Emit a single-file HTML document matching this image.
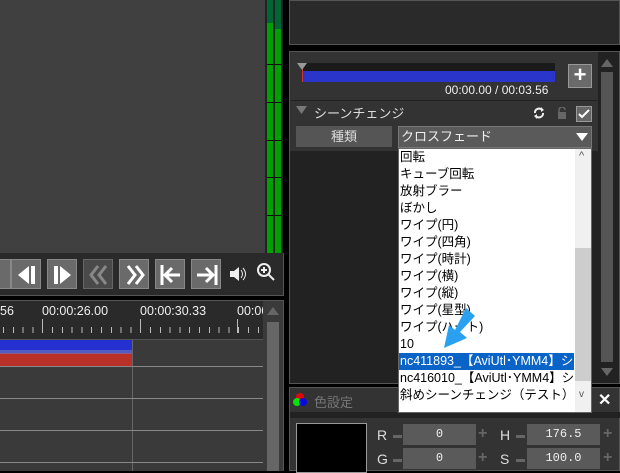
<!DOCTYPE html>
<html><head><meta charset="utf-8"><style>
*{margin:0;padding:0;box-sizing:border-box}
body{width:620px;height:471px;background:#000;position:relative;overflow:hidden;font-family:"Liberation Sans","Noto Sans CJK JP",sans-serif;color:#ddd}
.a{position:absolute}
.btn{position:absolute;top:259px;width:30px;height:30px;background:#6a6a6a;border:1px solid #888}
.li{position:absolute;left:400px;font-size:12.5px;color:#000;height:17px;line-height:17px;white-space:nowrap;z-index:5}
.tk{position:absolute;width:1px;background:#bbb}
.dd{z-index:4}
</style></head><body>
<!-- left preview -->
<div class="a" style="left:0;top:0;width:266px;height:253px;background:#404040"></div>
<div class="a" style="left:265px;top:0;width:18px;height:253px;background:#222"></div>
<div class="a" style="left:267px;top:0;width:6px;height:253px;background:#00a000"></div>
<div class="a" style="left:275px;top:0;width:6px;height:253px;background:#00a000"></div>
<div class="a" style="left:267px;top:0;width:6px;height:23px;background:#063"></div>
<div class="a" style="left:275px;top:0;width:6px;height:29px;background:#063"></div>
<div class="a" style="left:267px;top:64px;width:14px;height:1px;background:#111"></div>
<div class="a" style="left:267px;top:102px;width:14px;height:1px;background:#111"></div>
<div class="a" style="left:267px;top:140px;width:14px;height:1px;background:#111"></div>
<div class="a" style="left:267px;top:177px;width:14px;height:1px;background:#111"></div>
<div class="a" style="left:267px;top:215px;width:14px;height:1px;background:#111"></div>
<!-- transport -->
<div class="a" style="left:0;top:253px;width:284px;height:43px;background:#2a2a2a;border-right:1px solid #555;border-bottom:1px solid #555"></div>
<div class="btn" style="left:-19px"></div>
<div class="btn" style="left:11px"><svg width="30" height="30"><path d="M6 15L17 6V24Z M19 6h4v18h-4z" fill="#fff"/></svg></div>
<div class="btn" style="left:47px"><svg width="30" height="30"><path d="M6 6h4v18h-4z M12 6L23 15 12 24Z" fill="#fff"/></svg></div>
<div class="btn" style="left:83px;background:#4a4a4a;border-color:#666"><svg width="30" height="30"><path d="M14 6L7 15 14 24 M22 6L15 15 22 24" stroke="#888" stroke-width="3" fill="none"/></svg></div>
<div class="btn" style="left:119px"><svg width="30" height="30"><path d="M8 6L15 15 8 24 M16 6L23 15 16 24" stroke="#fff" stroke-width="3" fill="none"/></svg></div>
<div class="btn" style="left:155px"><svg width="30" height="30"><path d="M6 5v20M24 15H10M16 8L9 15 16 22" stroke="#fff" stroke-width="3" fill="none"/></svg></div>
<div class="btn" style="left:191px"><svg width="30" height="30"><path d="M24 5v20M5 15H20M14 8L21 15 14 22" stroke="#fff" stroke-width="3" fill="none"/></svg></div>
<svg class="a" style="left:228px;top:265px" width="20" height="18"><path d="M2 6h4l5-4v14l-5-4H2z" fill="#eee"/><path d="M13 5q3 4 0 8M15 3q5 6 0 12" stroke="#eee" fill="none"/></svg>
<svg class="a" style="left:256px;top:262px" width="20" height="20"><circle cx="8" cy="8" r="6" stroke="#eee" stroke-width="2" fill="none"/><path d="M12 12l6 6M5 8h6M8 5v6" stroke="#eee" stroke-width="2"/></svg>
<!-- timeline -->
<div class="a" style="left:0;top:300px;width:284px;height:171px;background:#3a3a3a;border-right:1px solid #555;border-top:1px solid #555"></div>
<div class="a" style="left:0;top:301px;width:263px;height:38px;background:#2a2a2a"></div>
<div class="a" style="left:0;top:304px;font-size:12.5px;color:#eee;white-space:nowrap">56</div>
<div class="a" style="left:42px;top:304px;font-size:12.5px;color:#eee">00:00:26.00</div>
<div class="a" style="left:140px;top:304px;font-size:12.5px;color:#eee">00:00:30.33</div>
<div class="a" style="left:237px;top:304px;font-size:12.5px;color:#eee;width:26px;overflow:hidden;white-space:nowrap">00:00</div>
<div class="tk" style="left:42px;top:319px;height:14px"></div>
<div class="tk" style="left:140px;top:319px;height:14px"></div>
<div class="tk" style="left:237px;top:319px;height:14px"></div>
<div class="a" style="left:3px;top:327px;width:260px;height:6px;background:repeating-linear-gradient(90deg,#bbb 0 1px,transparent 1px 9.8px)"></div>
<div class="a" style="left:0;top:339px;width:263px;height:1px;background:#555"></div>
<div class="a" style="left:0;top:340px;width:132px;height:13px;background:#2530d0"></div>
<div class="a" style="left:0;top:353px;width:132px;height:13px;background:#b83028"></div>
<div class="a" style="left:0;top:350px;width:132px;height:4px;background:#7078c0;opacity:.6"></div>
<div class="a" style="left:132px;top:340px;width:1px;height:131px;background:#666"></div>
<div class="a" style="left:0;top:366px;width:263px;height:1px;background:#888"></div>
<div class="a" style="left:0;top:398px;width:263px;height:1px;background:#888"></div>
<div class="a" style="left:0;top:430px;width:263px;height:1px;background:#888"></div>
<div class="a" style="left:0;top:462px;width:263px;height:1px;background:#888"></div>
<div class="a" style="left:267px;top:322px;width:12px;height:149px;background:#666"></div>
<svg class="a" style="left:267px;top:305px" width="12" height="10"><path d="M0 10L6 2 12 10Z" fill="#666"/></svg>
<!-- right top -->
<div class="a" style="left:289px;top:0;width:331px;height:45px;background:#2a2a2a;border:1px solid #555"></div>
<!-- right panel -->
<div class="a" style="left:289px;top:51px;width:331px;height:333px;background:#222;border:1px solid #555"></div>
<div class="a" style="left:290px;top:52px;width:308px;height:48px;background:#333"></div>
<div class="a" style="left:302px;top:63px;width:253px;height:9px;background:#1a1a1a"></div>
<div class="a" style="left:302px;top:71px;width:253px;height:11px;background:#2a35cc"></div>
<div class="a" style="left:302px;top:65px;width:1px;height:17px;background:#c33"></div>
<svg class="a" style="left:297px;top:63px" width="12" height="8"><path d="M0 0H10L5 7Z" fill="#999"/></svg>
<div class="a" style="left:445px;top:83px;font-size:12px;color:#eee">00:00.00 / 00:03.56</div>
<div class="a" style="left:568px;top:64px;width:24px;height:24px;background:#6a6a6a;border:1px solid #999;color:#fff;font-size:22px;line-height:20px;text-align:center;font-weight:bold">+</div>
<div class="a" style="left:290px;top:101px;width:308px;height:50px;background:#333"></div>
<svg class="a" style="left:296px;top:106px" width="12" height="9"><path d="M0 0H11L5.5 8Z" fill="#777"/></svg>
<div class="a" style="left:314px;top:103px;font-size:13px;color:#ddd">シーンチェンジ</div>
<svg class="a" style="left:533px;top:107px" width="12" height="12"><path d="M2 6a4 4 0 0 1 7-3M10 6a4 4 0 0 1-7 3" stroke="#eee" stroke-width="2" fill="none"/><path d="M8 0l3 3-3 2z M4 12l-3-3 3-2z" fill="#eee"/></svg>
<svg class="a" style="left:557px;top:107px" width="10" height="12"><path d="M2 5V3a3 3 0 0 1 6 0" stroke="#666" stroke-width="1.5" fill="none"/><rect x="1" y="5" width="8" height="7" fill="#666"/></svg>
<div class="a" style="left:576px;top:106px;width:16px;height:16px;background:#666;border:1px solid #999"><svg width="14" height="14"><path d="M2 7l3 3 7-7" stroke="#fff" stroke-width="2" fill="none"/></svg></div>
<div class="a" style="left:296px;top:126px;width:96px;height:21px;background:#555;color:#ddd;font-size:13px;text-align:center;line-height:21px">種類</div>
<div class="a" style="left:398px;top:126px;width:194px;height:22px;background:#5a5a5a;border:1px solid #777;color:#eee;font-size:13px;line-height:20px;padding-left:2px">クロスフェード</div>
<svg class="a" style="left:576px;top:133px" width="12" height="8"><path d="M0 0H12L6 8Z" fill="#fff"/></svg>
<!-- panel scrollbar -->
<div class="a" style="left:601px;top:72px;width:12px;height:290px;background:#555"></div>
<svg class="a" style="left:601px;top:57px" width="12" height="10"><path d="M0 10L6 2 12 10Z" fill="#666"/></svg>
<svg class="a" style="left:601px;top:368px" width="12" height="10"><path d="M0 0L6 8 12 0Z" fill="#666"/></svg>
<!-- color panel -->
<div class="a" style="left:289px;top:387px;width:331px;height:84px;background:#333;border:1px solid #555"></div>
<div class="a" style="left:290px;top:412px;width:330px;height:6px;background:#222"></div>
<svg class="a" style="left:292px;top:392px" width="16" height="16"><circle cx="8" cy="5" r="4" fill="#f00" opacity=".85"/><circle cx="5" cy="10" r="4" fill="#0f0" opacity=".85"/><circle cx="11" cy="10" r="4" fill="#00f" opacity=".85"/></svg>
<div class="a" style="left:314px;top:392px;font-size:13px;color:#777">色設定</div>
<div class="a" style="left:598px;top:390px;font-size:16px;color:#fff;font-weight:bold">✕</div>
<div class="a" style="left:296px;top:423px;width:71px;height:50px;background:#000;border:1px solid #999"></div>
<div class="a" style="left:377px;top:427px;font-size:14px;color:#ddd">R</div>
<div class="a" style="left:377px;top:451px;font-size:14px;color:#ddd">G</div>
<div class="a" style="left:500px;top:427px;font-size:14px;color:#ddd">H</div>
<div class="a" style="left:500px;top:451px;font-size:14px;color:#ddd">S</div>
<div class="a" style="left:393px;top:435px;width:9px;height:3px;background:#666"></div>
<div class="a" style="left:393px;top:459px;width:9px;height:3px;background:#666"></div>
<div class="a" style="left:516px;top:435px;width:9px;height:3px;background:#666"></div>
<div class="a" style="left:516px;top:459px;width:9px;height:3px;background:#666"></div>
<div class="a" style="left:403px;top:424px;width:73px;height:21px;background:#5a5a5a;color:#eee;font-family:'Liberation Mono',monospace;font-size:12px;text-align:center;line-height:21px">0</div>
<div class="a" style="left:403px;top:448px;width:73px;height:21px;background:#5a5a5a;color:#eee;font-family:'Liberation Mono',monospace;font-size:12px;text-align:center;line-height:21px">0</div>
<div class="a" style="left:527px;top:424px;width:73px;height:21px;background:#5a5a5a;color:#eee;font-family:'Liberation Mono',monospace;font-size:12px;text-align:center;line-height:21px">176.5</div>
<div class="a" style="left:527px;top:448px;width:73px;height:21px;background:#5a5a5a;color:#eee;font-family:'Liberation Mono',monospace;font-size:12px;text-align:center;line-height:21px">100.0</div>
<div class="a" style="left:478px;top:425px;font-size:16px;color:#666;font-weight:bold">+</div>
<div class="a" style="left:478px;top:449px;font-size:16px;color:#666;font-weight:bold">+</div>
<div class="a" style="left:603px;top:425px;font-size:16px;color:#666;font-weight:bold">+</div>
<div class="a" style="left:603px;top:449px;font-size:16px;color:#666;font-weight:bold">+</div>
<!-- dropdown list (on top) -->
<div class="a dd" style="left:398px;top:148px;width:194px;height:265px;background:#fff;border:1px solid #666"></div>
<div class="a dd" style="left:575px;top:149px;width:16px;height:263px;background:#f0f0f0"></div>
<div class="a dd" style="left:575px;top:248px;width:16px;height:133px;background:#cdcdcd"></div>
<div class="a dd" style="left:579px;top:150px;font-size:11px;color:#555">^</div>
<div class="a dd" style="left:579px;top:389px;font-size:10px;color:#555">v</div>
<div class="li" style="top:149px">回転</div>
<div class="li" style="top:166px">キューブ回転</div>
<div class="li" style="top:183px">放射ブラー</div>
<div class="li" style="top:200px">ぼかし</div>
<div class="li" style="top:217px">ワイプ(円)</div>
<div class="li" style="top:234px">ワイプ(四角)</div>
<div class="li" style="top:251px">ワイプ(時計)</div>
<div class="li" style="top:268px">ワイプ(横)</div>
<div class="li" style="top:285px">ワイプ(縦)</div>
<div class="li" style="top:302px">ワイプ(星型)</div>
<div class="li" style="top:319px">ワイプ(ハート)</div>
<div class="li" style="top:336px">10</div>
<div class="a dd" style="left:399px;top:353px;width:175px;height:17px;background:#0a64c8"></div>
<div class="li" style="top:353px;color:#fff;width:174px;overflow:hidden">nc411893_【AviUtl･YMM4】シーン</div>
<div class="li" style="top:370px;width:174px;overflow:hidden">nc416010_【AviUtl･YMM4】シーン</div>
<div class="li" style="top:387px">斜めシーンチェンジ（テスト）</div>
<svg class="a" style="left:440px;top:308px;z-index:6" width="36" height="42"><path d="M26 0L35 8 20 24 27 30 4 40 9 17 15 22Z" fill="#2aa0f0"/></svg>
</body></html>
